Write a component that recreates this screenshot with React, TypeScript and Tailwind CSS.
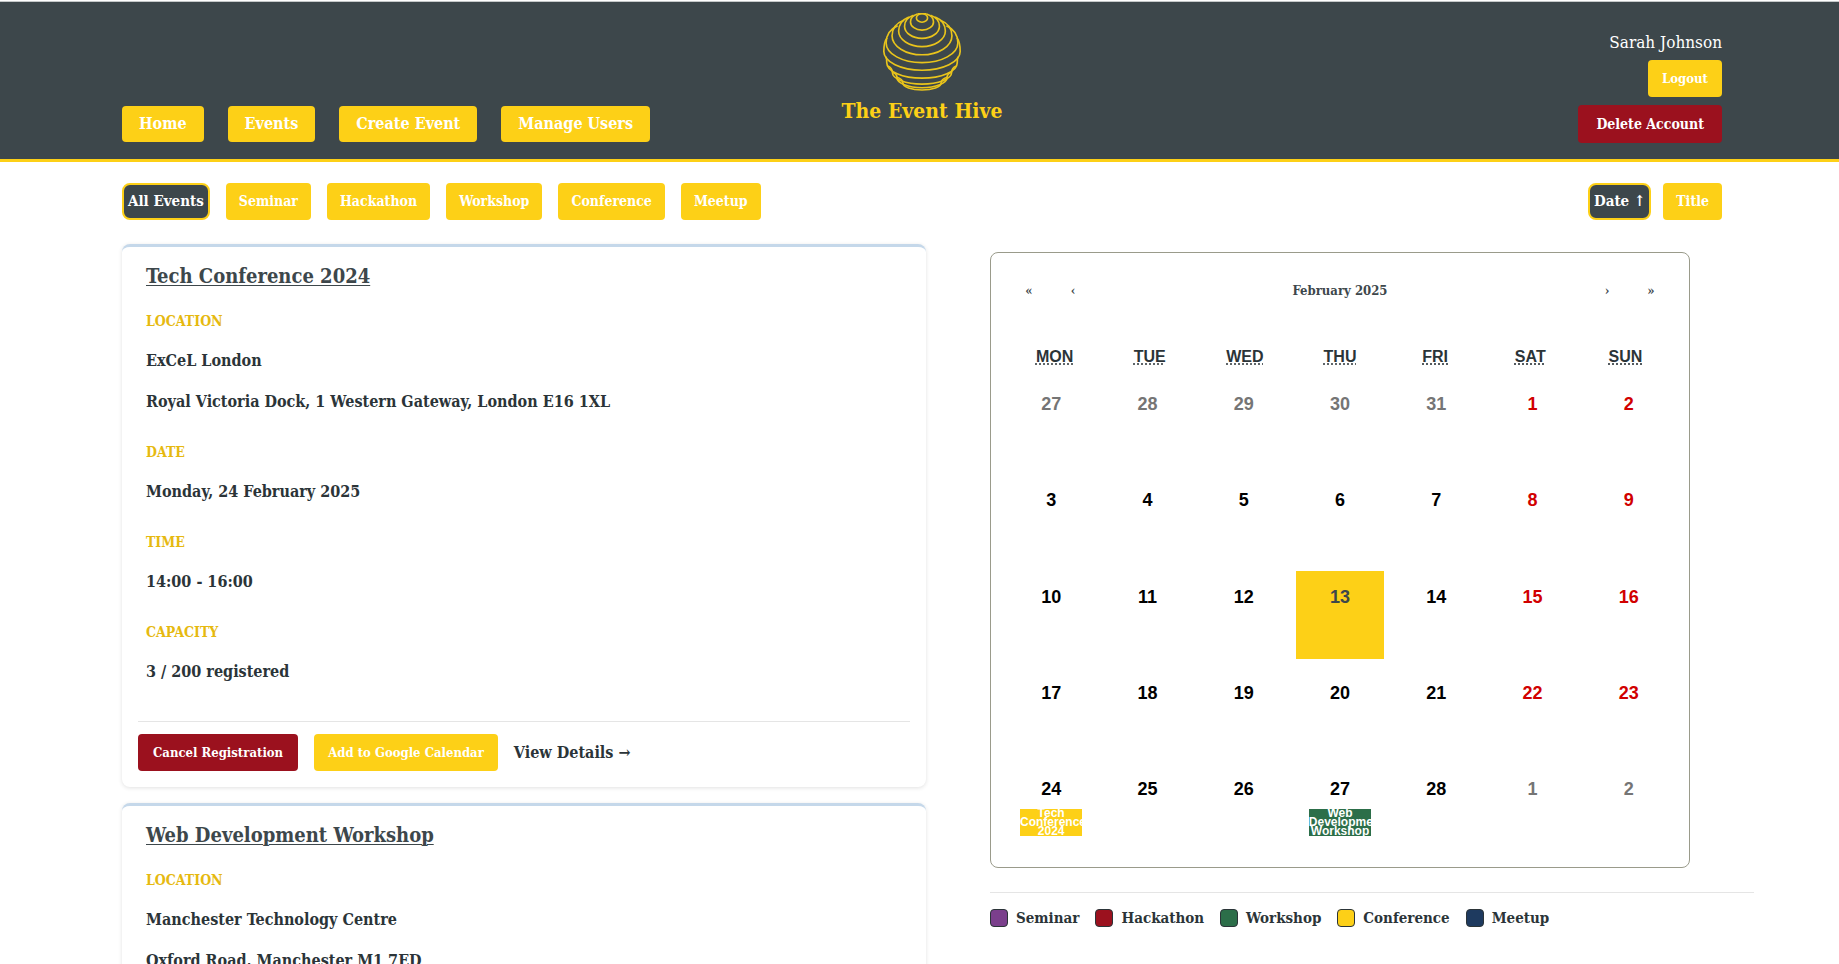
import React from "react";

type Tag = { name: string; color: string };

type EventCard = {
  title: string;
  venue: string;
  address: string;
  date: string;
  time: string;
  capacity: string;
};

const tags: Tag[] = [
  { name: "Seminar", color: "bg-[#7b3f8c]" },
  { name: "Hackathon", color: "bg-[#9b111e]" },
  { name: "Workshop", color: "bg-[#2c6e49]" },
  { name: "Conference", color: "bg-[#fdd017]" },
  { name: "Meetup", color: "bg-[#1e3a5f]" },
];

const events: EventCard[] = [
  {
    title: "Tech Conference 2024",
    venue: "ExCeL London",
    address: "Royal Victoria Dock, 1 Western Gateway, London E16 1XL",
    date: "Monday, 24 February 2025",
    time: "14:00 - 16:00",
    capacity: "3 / 200 registered",
  },
  {
    title: "Web Development Workshop",
    venue: "Manchester Technology Centre",
    address: "Oxford Road, Manchester M1 7ED",
    date: "Thursday, 27 February 2025",
    time: "10:00 - 12:00",
    capacity: "1 / 50 registered",
  },
];

// Front halves of the hive's bands: start offset, start y, half width, widest y, bottom y
const bands = [
  [14, 16, 35, 40, 65],
  [26, 20, 53, 53, 90],
  [40, 25, 71, 68, 115],
  [56, 35, 91, 82, 140],
  [74, 52, 109, 104, 164],
  [106, 88, 116, 130, 187],
  [109, 146, 107, 165, 211],
  [104, 174, 90, 194, 229],
  [88, 194, 76, 210, 240],
  [76, 208, 58, 226, 247],
];

function bandPath([s, sy, w, wy, b]: number[]) {
  const c = 134;
  const k = wy + (b - wy) * 0.55;
  const m = sy + (wy - sy) * 0.45;
  return `M${c - s} ${sy}C${c - (s + w) / 2} ${sy + (wy - sy) * 0.15} ${c - w} ${m} ${c - w} ${wy}C${c - w} ${k} ${c - w * 0.55} ${b} ${c} ${b}S${c + w} ${k} ${c + w} ${wy}C${c + w} ${m} ${c + (s + w) / 2} ${sy + (wy - sy) * 0.15} ${c + s} ${sy}`;
}

function HiveLogo() {
  return (
    <svg viewBox="16 13 236 237" className="size-[78px]" fill="none" stroke="#e9c41b" strokeWidth="5" strokeLinejoin="round" aria-hidden="true">
      <ellipse cx="134" cy="28" rx="17" ry="13" />
      <path d="M120 16Q134 13 148 16" />
      {bands.map((band) => (
        <path key={band[4]} d={bandPath(band)} />
      ))}
    </svg>
  );
}

const yellowButton = "h-[37px] rounded bg-[#fdd017] px-[14px] text-[13px] font-bold text-white";
const tagButton = "h-[37px] rounded bg-[#fdd017] px-[13px] text-[14px] font-bold text-white";
const activeButton = "h-[37px] rounded-lg border-2 border-[#fdd017] bg-[#3d474b] px-1 text-[15px] font-bold text-white";

function Header() {
  return (
    <header className="mt-px border-t border-b-[3px] border-t-[#c5c8c9] border-b-[#fdd017] bg-[#3d474b] pl-[5px]">
      <div className="mx-auto grid h-[157px] max-w-[1600px] grid-cols-[1fr_auto_1fr]">
        <nav className="flex items-end gap-6 pb-[17px]">
          {["Home", "Events", "Create Event", "Manage Users"].map((item) => (
            <a key={item} href="#" className="flex h-9 items-center rounded bg-[#fdd017] px-[17px] text-[16px] font-bold whitespace-nowrap text-white">
              {item}
            </a>
          ))}
        </nav>
        <a href="#" className="flex flex-col items-center pt-[11px] text-[#fdd017]">
          <HiveLogo />
          <span className="mt-1 text-[21px] leading-8 font-bold">The Event Hive</span>
        </a>
        <div className="flex flex-col items-end gap-2 pt-[30px]">
          <span className="text-[17px] leading-5 text-white">Sarah Johnson</span>
          <button className={yellowButton}>Logout</button>
          <button className="h-[38px] rounded bg-[#9b111e] px-[18px] text-[14px] font-bold text-white">Delete Account</button>
        </div>
      </div>
    </header>
  );
}

function Toolbar() {
  return (
    <div className="flex justify-between">
      <div className="flex gap-4">
        <button className={activeButton}>All Events</button>
        {tags.map((tag) => (
          <button key={tag.name} className={tagButton}>{tag.name}</button>
        ))}
      </div>
      <div className="flex gap-3">
        <button className={activeButton}>Date ↑</button>
        <button className={tagButton}>Title</button>
      </div>
    </div>
  );
}

function Field({ label, lines }: { label: string; lines: string[] }) {
  return (
    <div className="mb-[14px]">
      <dt className="pb-[3px] text-[14px] leading-8 font-bold text-[#e6b910] uppercase">{label}</dt>
      {lines.map((line) => (
        <dd key={line} className="py-2 text-[16px] leading-[25px] font-bold text-[#2b3438]">{line}</dd>
      ))}
    </div>
  );
}

function Card({ event }: { event: EventCard }) {
  return (
    <article className="rounded-lg border-t-[3px] border-[#c5d8ea] bg-white px-4 pb-4 shadow-[0_1px_4px_rgba(0,0,0,0.12)]">
      <div className="px-2 pt-[13px]">
        <h2 className="text-[20px] leading-8 font-bold text-[#3d474b]">
          <a href="#" className="underline decoration-1 underline-offset-2">{event.title}</a>
        </h2>
        <dl className="pt-[13px] pb-[15px]">
          <Field label="Location" lines={[event.venue, event.address]} />
          <Field label="Date" lines={[event.date]} />
          <Field label="Time" lines={[event.time]} />
          <Field label="Capacity" lines={[event.capacity]} />
        </dl>
      </div>
      <div className="flex items-center gap-4 border-t border-[#e5e5e5] pt-3">
        <button className="h-[37px] rounded bg-[#9b111e] px-[15px] text-[13px] font-bold text-white">Cancel Registration</button>
        <button className={yellowButton}>Add to Google Calendar</button>
        <a href="#" className="text-[16px] font-bold text-[#2b3438]">View Details →</a>
      </div>
    </article>
  );
}

const weekdays = ["Mon", "Tue", "Wed", "Thu", "Fri", "Sat", "Sun"];
const days = [27, 28, 29, 30, 31, ...Array.from({ length: 28 }, (_, i) => i + 1), 1, 2];
const calendarEvents: Record<number, { title: string; color: string }> = {
  28: { title: "Tech Conference 2024", color: "bg-[#fdd017]" },
  31: { title: "Web Development Workshop", color: "bg-[#2c6e49]" },
};

function dayColor(index: number) {
  if (index < 5 || index > 32) return "text-[#757575]";
  if (index === 17) return "bg-[#fdd017] text-[#3d474b]";
  return index % 7 > 4 ? "text-[#d10000]" : "text-black";
}

function Calendar() {
  return (
    <section className="mr-8 rounded-lg border border-[#9a9b8b] bg-white p-4">
      <div className="flex h-11 items-center text-[13px] font-bold text-[#3d474b]">
        <button aria-label="Previous year" className="h-11 w-11">«</button>
        <button aria-label="Previous month" className="h-11 w-11">‹</button>
        <button className="h-11 flex-1">February 2025</button>
        <button aria-label="Next month" className="h-11 w-11">›</button>
        <button aria-label="Next year" className="h-11 w-11">»</button>
      </div>
      <div className="mt-[23px] grid h-[42px] grid-cols-7 font-['Liberation_Sans',sans-serif]">
        {weekdays.map((day) => (
          <div key={day} className="flex items-center justify-center text-[16px] font-bold text-[#2b3438] uppercase">
            <abbr title={day} className="underline decoration-dotted underline-offset-2">{day}</abbr>
          </div>
        ))}
      </div>
      <div className="grid grid-cols-7 gap-2 font-['Liberation_Sans',sans-serif]">
        {days.map((day, index) => (
          <button key={index} className={`flex aspect-square min-w-0 flex-col items-center px-[13px] pt-4 text-[18px] leading-5 font-bold ${dayColor(index)}`}>
            {day}
            {calendarEvents[index] && (
              <span className={`mt-[10px] block w-full overflow-hidden text-center text-[12px] leading-[9px] text-white ${calendarEvents[index].color}`}>
                {calendarEvents[index].title}
              </span>
            )}
          </button>
        ))}
      </div>
    </section>
  );
}

function Legend() {
  return (
    <ul className="mt-6 -mr-8 flex gap-4 border-t border-[#e5e5e5] pt-[15px]">
      {tags.map((tag) => (
        <li key={tag.name} className="flex items-center gap-2 text-[15px] leading-5 font-bold text-[#2b3438]">
          <span className={`size-[18px] rounded border border-[#2b3438] ${tag.color}`} />
          {tag.name}
        </li>
      ))}
    </ul>
  );
}

export default function App() {
  return (
    <div className="h-screen overflow-hidden bg-white font-['DejaVu_Serif_Condensed','DejaVu_Serif',serif]">
      <Header />
      <main className="pt-[21px] pl-[5px]">
        <div className="mx-auto max-w-[1600px]">
          <Toolbar />
          <div className="mt-6 grid grid-cols-[804fr_732fr] items-start gap-16">
            <div className="flex flex-col gap-4">
              {events.map((event) => (
                <Card key={event.title} event={event} />
              ))}
            </div>
            <aside className="pt-2">
              <Calendar />
              <Legend />
            </aside>
          </div>
        </div>
      </main>
    </div>
  );
}
